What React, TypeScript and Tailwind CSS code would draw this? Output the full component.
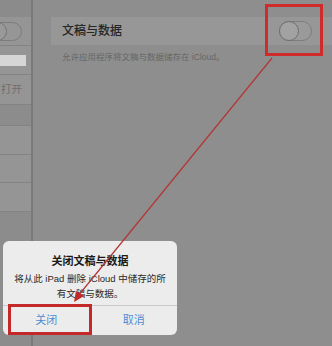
import React from 'react';

const font = { fontFamily: '"Liberation Sans", "Noto Sans CJK SC", sans-serif' };

const Toggle = () => (
  <div className="relative w-[33px] h-[20px] rounded-full border border-[#7d7d7d] bg-[#9a9a9a]">
    <div className="absolute -left-px -top-px w-[20px] h-[20px] rounded-full border border-[#6f6f6f] bg-[#a2a2a2]" />
  </div>
);

export default function App() {
  return (
    <div className="relative w-[332px] h-[346px] overflow-hidden bg-[#8e8e8e]" style={font}>
      <div className="flex h-full">
        {/* Left list column */}
        <div className="w-[33px] shrink-0 border-r-2 border-[#7a7a7a] flex flex-col">
          <div className="h-[17px] bg-[#8b8b8b]" />
          <div className="h-[29px] bg-[#959595] border-b border-[#838383] flex items-center overflow-hidden">
            <div className="-ml-[12px] relative w-[34px] h-[19px] rounded-full border border-[#7c7c7c] bg-[#969696]">
              <div className="absolute -left-px -top-px w-[19px] h-[19px] rounded-full border border-[#757575] bg-[#999]" />
            </div>
          </div>
          <div className="h-[29px] bg-[#959595] border-b border-[#838383] flex items-center">
            <div className="w-[26px] h-[11px] bg-[#d6d6d6]" />
          </div>
          <div className="h-[30px] bg-[#959595] border-b border-[#838383] flex items-center">
            <span className="text-[10.5px] text-[#6e6e6e] ml-[1px]">打开</span>
          </div>
          <div className="h-[21px] bg-[#8c8c8c] border-b border-[#838383]" />
          <div className="h-[29px] bg-[#959595] border-b border-[#838383]" />
          <div className="h-[28px] bg-[#959595] border-b border-[#838383]" />
          <div className="h-[29px] bg-[#959595] border-b border-[#838383]" />
          <div className="flex-1 bg-[#8c8c8c]" />
        </div>

        {/* Right detail pane */}
        <div className="flex-1 pt-[17px] pl-[18px]">
          <div className="h-[28px] bg-[#979797] flex items-center justify-between pl-[11px] pr-[20px]">
            <span className="text-[12px] font-medium text-[#262626]">文稿与数据</span>
            <Toggle />
          </div>
          <div className="pl-[11px] pt-[6px] text-[8.5px] text-[#666] whitespace-nowrap">
            允许应用程序将文稿与数据储存在 iCloud。
          </div>
        </div>
      </div>

      {/* Alert dialog */}
      <div className="absolute left-[3px] top-[241px] w-[174px] h-[94px] rounded-[6px] bg-[#ececec] flex flex-col">
        <div className="flex-1 flex flex-col items-center pt-[13px]">
          <div className="text-[11px] font-bold text-[#1a1a1a] leading-[14px]">关闭文稿与数据</div>
          <div className="mt-[3px] text-[9.5px] text-[#2a2a2a] leading-[15px] text-center whitespace-nowrap">
            将从此 iPad 删除 iCloud 中储存的所<br />有文稿与数据。
          </div>
        </div>
        <div className="h-[30px] border-t border-[#c9c9c9] flex">
          <div className="flex-1 flex items-center justify-center text-[11px] text-[#4c8fd4] border-r border-[#c9c9c9]">关闭</div>
          <div className="flex-1 flex items-center justify-center text-[11px] text-[#4c8fd4]">取消</div>
        </div>
      </div>

      {/* Annotations */}
      <div className="absolute left-[265px] top-[4px] w-[58px] h-[52px] border-[3px] border-[#d02b2b]" />
      <div className="absolute left-[8px] top-[304px] w-[84px] h-[31px] border-[3px] border-[#c42828]" />
      <svg className="absolute left-0 top-0" width="332" height="346">
        <line x1="272" y1="58" x2="78" y2="296" stroke="#b23636" strokeWidth="1.2" />
        <polygon points="74,302 76,291 84,296" fill="#c42828" />
      </svg>
    </div>
  );
}
